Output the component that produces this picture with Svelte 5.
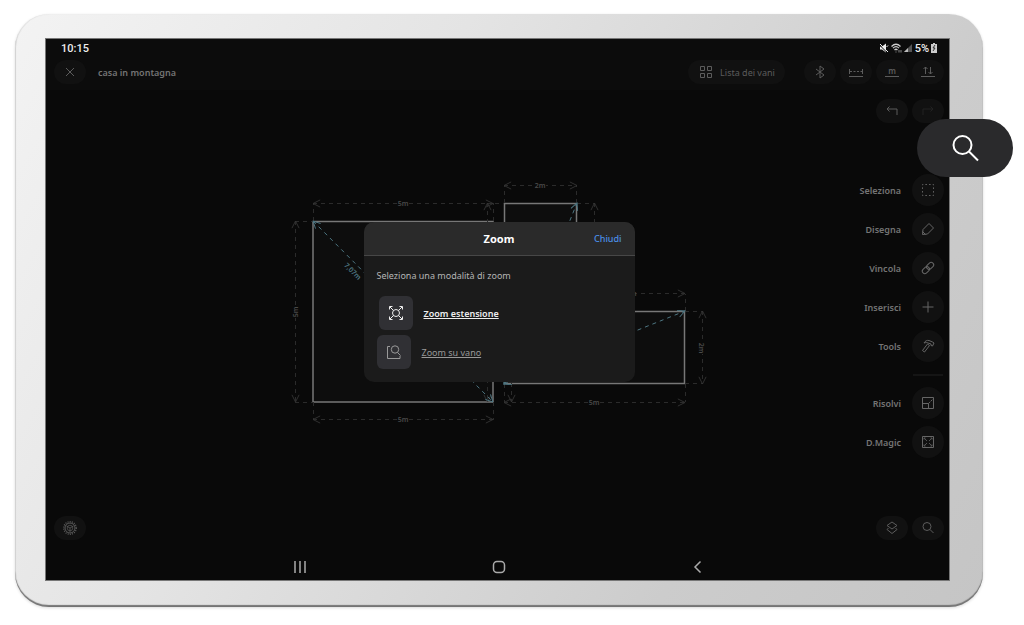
<script lang="ts">
    interface Tool {
        id: string;
        label: string;
    }

    const drawTools: Tool[] = [
        { id: 'select', label: 'Seleziona' },
        { id: 'draw', label: 'Disegna' },
        { id: 'link', label: 'Vincola' },
        { id: 'insert', label: 'Inserisci' },
        { id: 'tools', label: 'Tools' }
    ];

    const solveTools: Tool[] = [
        { id: 'solve', label: 'Risolvi' },
        { id: 'magic', label: 'D.Magic' }
    ];

    const headerActions: Tool[] = [
        { id: 'bluetooth', label: 'Bluetooth' },
        { id: 'measure', label: 'Misura' },
        { id: 'unit', label: 'Unità' },
        { id: 'sort', label: 'Ordina' }
    ];

    let dialogOpen = $state(true);
    let activeTool = $state('');

    function handleKeydown(e: KeyboardEvent) {
        if (e.key === 'Escape') dialogOpen = false;
    }
</script>

<svelte:window onkeydown={handleKeydown} />

{#snippet icon(id: string)}
    <svg class="icon" viewBox="0 0 16 16" aria-hidden="true">
        {#if id === 'close'}
            <path d="M4 4l8 8M12 4l-8 8" />
        {:else if id === 'grid'}
            <path d="M2.5 2.5h4v4h-4zM9.5 2.5h4v4h-4zM2.5 9.5h4v4h-4zM9.5 9.5h4v4h-4z" />
        {:else if id === 'bluetooth'}
            <path d="M4 5l8 6-4 3V2l4 3-8 6" />
        {:else if id === 'measure'}
            <path d="M1.5 5v5M14.5 5v5" />
            <path d="M2 7.5h12" stroke-dasharray="2 1.5" />
            <path d="M1 12.5h14" />
        {:else if id === 'unit'}
            <text x="8" y="10" text-anchor="middle">m</text>
            <path d="M1 12.5h14" />
        {:else if id === 'sort'}
            <path d="M5.5 10V3M3.5 5l2-2 2 2M10.5 3v7M8.5 8l2 2 2-2" />
            <path d="M1 12.5h14" />
        {:else if id === 'undo'}
            <path d="M5.5 3.5L3 6l2.5 2.5M3 6h10v6" />
        {:else if id === 'redo'}
            <path d="M10.5 3.5L13 6l-2.5 2.5M13 6H3v6" />
        {:else if id === 'select'}
            <rect x="2.5" y="2.5" width="11" height="11" stroke-dasharray="1.5 2.17" stroke-dashoffset=".75" />
        {:else if id === 'draw'}
            <path d="M2.500 13.500l.5-5 6-6 4.500 4.500-6 6zM2.500 10.500l3 3" />
        {:else if id === 'link'}
            <g transform="rotate(-45 8 8)">
                <rect x="1" y="5.500" width="8" height="5" rx="2.500" />
                <rect x="7" y="5.500" width="8" height="5" rx="2.500" />
            </g>
        {:else if id === 'insert'}
            <path d="M8 2.5v11M2.5 8h11" />
        {:else if id === 'tools'}
            <path d="M7.500 6l2 1.500-5 6.500-2-1.500zM4 5c1-2 3-3 5-2.500l3.500 1.500 1.500 1-1.500 3-1.500-.5v-1.500L8 5c-1-.6-2-.6-4 0z" />
        {:else if id === 'solve'}
            <path d="M2.5 2.5h11v11h-11zM2.5 8.500h6v5" />
            <path d="M8.500 8.500l5-5" stroke-dasharray="2 1" />
        {:else if id === 'magic'}
            <path d="M2.5 2.5h11v11h-11z" />
            <path d="M4.500 4.500l2.500 2.500M11.500 4.500l-2.500 2.500M4.500 11.500l2.500-2.500M11.500 11.500l-2.500-2.500M4 5.500V4h1.500M10.500 4H12v1.500M4 10.500V12h1.500M10.500 12H12v-1.500" stroke-width=".8" />
        {:else if id === 'settings'}
            <circle cx="8" cy="8" r="6.3" stroke-width="1.300" stroke-dasharray="1 1.200" />
            <circle cx="8" cy="8" r="5" />
            <circle cx="8" cy="8" r="2.800" stroke-width=".7" />
            <path d="M8 8v4M8 8L4.500 6M8 8l3.500-2" stroke-width=".8" />
        {:else if id === 'layers'}
            <path d="M8 2l5 3.500L8 9 3 5.500zM4.500 8L3 9.500 8 13.500l5-4L11.500 8" />
        {:else if id === 'search'}
            <circle cx="7" cy="6.500" r="4" />
            <path d="M10 9.500l3.500 3.500" />
        {:else if id === 'zoom-extents'}
            <circle cx="8" cy="8" r="3.500" />
            <path d="M5.500 5.500L2 2M10.500 5.500L14 2M5.500 10.500L2 14M10.500 10.500l3.500 3.500M1.500 4.500v-3h3M11.500 1.500h3v3M1.500 11.500v3h3M11.500 14.500h3v-3" />
        {:else if id === 'zoom-room'}
            <path d="M4 2.500H1.500V14.500h12.500v-2.500" />
            <circle cx="9" cy="5.500" r="3.700" />
            <path d="M11.500 8.500l3 3" />
        {/if}
    </svg>
{/snippet}

{#snippet toolButton(tool: Tool)}
    <button
        class="tool"
        aria-pressed={activeTool === tool.id}
        onclick={() => (activeTool = tool.id)}
    >
        <span>{tool.label}</span>
        <span class="tool-disc">{@render icon(tool.id)}</span>
    </button>
{/snippet}

<div class="tablet">
    <main class="screen">
        <!-- Android status bar -->
        <div class="status-bar">
            <time>10:15</time>
            <div class="status-icons">
                <svg width="10" height="10" viewBox="0 0 10 10" aria-hidden="true">
                    <path d="M1 3.500h2l4-3v9l-4-3H1z" fill="#eee" />
                    <path d="M0 1.500l8.500 8.500" stroke="#0c0c0c" />
                    <path d="M1 1l8 8M7.500 4L9 2.500" stroke="#eee" />
                </svg>
                <svg width="11" height="10" viewBox="0 0 11 10" aria-hidden="true">
                    <path d="M.5 3.500q4.500-4.500 9 0M2 5.200q3-3 6 0M3.500 7q1.500-1.500 3 0" fill="none" stroke="#ccc" stroke-width="1.200" />
                    <path d="M5 8.500v1M8 7v2.500M10 7v2.500" stroke="#888" />
                </svg>
                <svg width="9" height="10" viewBox="0 0 9 10" aria-hidden="true">
                    <path d="M0 9l8-8v8z" fill="#555" />
                    <path d="M0 9l4-4v4z" fill="#bbb" />
                </svg>
                <span>5%</span>
                <svg width="6" height="10" viewBox="0 0 6 10" aria-hidden="true">
                    <path d="M2 0h2v1h2v9H0V1h2z" fill="#ccc" />
                    <path d="M4 2L2 5h2L2 8" fill="none" stroke="#333" />
                </svg>
            </div>
        </div>

        <header class="top-bar">
            <button class="pill" aria-label="Chiudi progetto">{@render icon('close')}</button>
            <h1>casa in montagna</h1>
            <button class="pill rooms">{@render icon('grid')}<span>Lista dei vani</span></button>
            <div class="pill-group">
                {#each headerActions as action}
                    <button class="pill" aria-label={action.label}>{@render icon(action.id)}</button>
                {/each}
            </div>
        </header>

        <div class="workspace">
            <!-- Floor plan -->
            <svg class="plan" viewBox="285 177 425 250" role="img" aria-label="Pianta">
                <defs>
                    <marker id="tip" viewBox="0 0 10 10" refX="9" refY="5" markerWidth="9" markerHeight="9" markerUnits="userSpaceOnUse" orient="auto-start-reverse">
                        <path d="M1 1l8 4-8 4" fill="none" stroke="#363636" />
                    </marker>
                    <marker id="tip-diagonal" viewBox="0 0 10 10" refX="9" refY="5" markerWidth="9" markerHeight="9" markerUnits="userSpaceOnUse" orient="auto-start-reverse">
                        <path d="M1 1l8 4-8 4" fill="none" stroke="#4d7682" />
                    </marker>
                </defs>
                <g class="room">
                    <path d="M313 221.500h180V402H313z" />
                    <path d="M504.500 203.500H576.500V311.500H684.500V383.500H504.500z" />
                </g>
                <g class="extension">
                    <path d="M313.500 221V203M493.500 221V203M295 221.500h18M295 402.500h18M313.500 402v18M493.500 402v18" />
                    <path d="M504.500 203V185M576.500 203V185M577 203.500h18M487 203.500h17M685.500 311V294M685 311.500h18M685 383.500h18M504.500 384v18M685.500 384v18" />
                </g>
                <g class="dimension">
                    <path d="M313 203.500h180" />
                    <path d="M295.500 221v181" />
                    <path d="M313 419.500h180" />
                    <path d="M504 185.500h73" />
                    <path d="M577 293.500h108" />
                    <path d="M702.500 311v73" />
                    <path d="M504 402.500h181" />
                    <path d="M487.500 203v199" />
                    <path d="M594.500 203v108" />
                    <path d="M511.500 311v91" />
                </g>
                <g class="diagonal">
                    <path d="M313 221l180 181" />
                    <path d="M504 384l73-181" />
                    <path d="M504 384l181-73" />
                </g>
                <g class="measure">
                    <rect x="397" y="200" width="12" height="7" />
                    <text x="403" y="206">5m</text>
                    <rect x="397" y="416" width="12" height="7" />
                    <text x="403" y="422">5m</text>
                    <rect x="534" y="182" width="12" height="7" />
                    <text x="540" y="188">2m</text>
                    <rect x="588" y="399" width="12" height="7" />
                    <text x="594" y="405">5m</text>
                    <text x="631" y="296">3m</text>
                    <g transform="translate(295 312) rotate(-90)">
                        <rect x="-6" y="-3" width="12" height="7" />
                        <text y="3">5m</text>
                    </g>
                    <g transform="translate(702 348) rotate(90)">
                        <rect x="-6" y="-3" width="12" height="7" />
                        <text y="3">2m</text>
                    </g>
                    <text class="diagonal-label" transform="translate(351 273) rotate(45)">7,07m</text>
                </g>
            </svg>

            <aside class="tools">
                <div class="pill-group">
                    <button class="pill" aria-label="Annulla">{@render icon('undo')}</button>
                    <button class="pill faded" aria-label="Ripeti" disabled>{@render icon('redo')}</button>
                </div>
                <div class="tool-list">
                    {#each drawTools as tool}
                        {@render toolButton(tool)}
                    {/each}
                </div>
                <hr />
                <div class="tool-list">
                    {#each solveTools as tool}
                        {@render toolButton(tool)}
                    {/each}
                </div>
            </aside>

            {#if dialogOpen}
                <div class="overlay">
                    <section class="dialog" role="dialog" aria-labelledby="zoom-title">
                        <div class="dialog-head">
                            <h2 id="zoom-title">Zoom</h2>
                            <button class="dismiss" onclick={() => (dialogOpen = false)}>Chiudi</button>
                        </div>
                        <div class="dialog-body">
                            <p>Seleziona una modalità di zoom</p>
                            <button class="mode active">
                                <span class="mode-tile">{@render icon('zoom-extents')}</span>
                                <span class="mode-name">Zoom estensione</span>
                            </button>
                            <button class="mode">
                                <span class="mode-tile">{@render icon('zoom-room')}</span>
                                <span class="mode-name">Zoom su vano</span>
                            </button>
                        </div>
                    </section>
                </div>
            {/if}
        </div>

        <footer class="bottom-bar">
            <button class="pill" aria-label="Impostazioni">{@render icon('settings')}</button>
            <div class="pill-group">
                <button class="pill" aria-label="Livelli">{@render icon('layers')}</button>
                <button class="pill" aria-label="Zoom" onclick={() => (dialogOpen = true)}>{@render icon('search')}</button>
            </div>
        </footer>

        <!-- Android navigation -->
        <nav class="system-nav">
            <button aria-label="Recenti">
                <svg viewBox="0 0 14 14"><path d="M2 1v12M7 1v12M12 1v12" /></svg>
            </button>
            <button aria-label="Home">
                <svg viewBox="0 0 14 14"><rect x="1.5" y="1.5" width="11" height="11" rx="3.5" /></svg>
            </button>
            <button aria-label="Indietro">
                <svg viewBox="0 0 14 14"><path d="M9.5 1.5L4 7l5.5 5.5" /></svg>
            </button>
        </nav>
    </main>

    <!-- Enlarged zoom button over the frame -->
    <button class="callout" aria-label="Apri zoom" onclick={() => (dialogOpen = true)}>
        <svg viewBox="0 0 28 28">
            <circle cx="11.5" cy="11" r="9" />
            <path d="M18 17.500l9 9" />
        </svg>
    </button>
</div>

<style>
    :global(body) {
        margin: 0;
        background: #fff;
    }

    .tablet {
        position: relative;
        margin: 14px 41px 18px 15px;
        padding: 24px 33px 26px 30px;
        border-radius: 34px;
        background: linear-gradient(120deg, #f3f3f3 0%, #e4e4e4 35%, #cccccc 75%, #c5c5c5 100%);
        box-shadow: inset 0 -2px 1px #747474, inset 1px 0 1px #ddd, 0 1px 3px rgba(0,0,0,0.15);
        font-family: "Noto Sans", sans-serif;
    }
    .screen {
        display: flex;
        flex-direction: column;
        border: 1px solid #777;
        background: #090909;
        color: #747474;
    }

    button {
        border: none;
        padding: 0;
        background: none;
        color: inherit;
        font: inherit;
        cursor: pointer;
    }
    h1, h2, p { margin: 0; }
    svg { display: block; }
    .icon {
        width: 16px;
        height: 16px;
        fill: none;
        stroke: currentColor;
        stroke-width: 1;
    }
    .icon text {
        fill: currentColor;
        stroke: none;
        font-size: 8px;
        font-weight: 600;
    }

    /* Status bar */
    .status-bar {
        display: flex;
        justify-content: space-between;
        align-items: center;
        height: 18px;
        padding: 0 12px 0 15px;
        background: #0c0c0c;
        color: #eee;
        font-family: Roboto, sans-serif;
        font-size: 11px;
        font-weight: 500;
    }
    .status-icons {
        display: flex;
        align-items: center;
        gap: 2px;
    }

    /* Pills */
    .pill {
        display: flex;
        align-items: center;
        justify-content: center;
        width: 32px;
        height: 24px;
        border-radius: 12px;
        background: #111;
        color: #5c5c5c;
    }
    .pill-group {
        display: flex;
        gap: 4px;
    }
    .faded { color: #222; }

    .top-bar {
        display: flex;
        align-items: center;
        padding: 3px 5px 6px 8px;
        background: #0c0c0c;
    }
    h1 {
        flex: 1;
        margin-left: 12px;
        font-size: 9px;
        font-weight: 600;
    }
    .rooms {
        gap: 6px;
        width: 97px;
        margin-right: 19px;
        font-size: 9px;
    }

    /* Workspace */
    .workspace {
        position: relative;
        display: grid;
    }
    .plan {
        grid-area: 1 / 1;
        place-self: center;
        width: 425px;
        height: 250px;
    }
    .room path {
        fill: #0d0d0d;
        stroke: #777;
        stroke-width: 1.5;
    }
    .extension path,
    .dimension path {
        fill: none;
        stroke: #2b2b2b;
        stroke-dasharray: 4 4;
    }
    .dimension path {
        marker-start: url(#tip);
        marker-end: url(#tip);
    }
    .diagonal path {
        stroke: #4d7682;
        stroke-dasharray: 4 4;
        marker-start: url(#tip-diagonal);
        marker-end: url(#tip-diagonal);
    }
    .measure rect { fill: #090909; }
    .measure text {
        fill: #4a4a4a;
        font-size: 7px;
        font-weight: 600;
        text-anchor: middle;
    }
    .measure .diagonal-label { fill: #4d7682; }

    .tools {
        grid-area: 1 / 1;
        justify-self: end;
        display: flex;
        flex-direction: column;
        align-items: flex-end;
        padding: 9px 5px 56px;
    }
    .tool-list {
        display: flex;
        flex-direction: column;
        gap: 7px;
    }
    .pill-group + .tool-list { margin-top: 51px; }
    .tool {
        display: flex;
        align-items: center;
        justify-content: flex-end;
        gap: 11px;
        font-size: 9px;
        font-weight: 600;
    }
    .tool-disc {
        display: flex;
        align-items: center;
        justify-content: center;
        width: 32px;
        height: 32px;
        border-radius: 50%;
        background: #111;
    }
    .tool-disc .icon { color: #666; }
    hr {
        width: 30px;
        height: 2px;
        margin: 12px 1px 11px;
        border: none;
        background: #151515;
    }

    /* Zoom dialog */
    .overlay {
        position: absolute;
        inset: 0;
        display: flex;
        align-items: center;
        justify-content: center;
        padding-left: 3px;
    }
    .dialog {
        width: 271px;
        border-radius: 10px;
        overflow: hidden;
        background: #1b1b1b;
        color: #b5b5b5;
        font-size: 9px;
    }
    .dialog-head {
        display: grid;
        grid-template-columns: 1fr auto 1fr;
        align-items: center;
        height: 33px;
        padding: 0 13px;
        border-bottom: 1px solid #474747;
        background: #2a2a2a;
    }
    h2 {
        grid-column: 2;
        color: #fff;
        font-size: 11px;
        font-weight: 700;
    }
    .dismiss {
        justify-self: end;
        color: #4a8fe7;
        font-weight: 500;
    }
    .dialog-body {
        display: flex;
        flex-direction: column;
        align-items: flex-start;
        padding: 14px 13px 13px;
    }
    p {
        margin-bottom: 14px;
        line-height: 12px;
    }
    .mode {
        display: flex;
        align-items: center;
        gap: 11px;
        color: #999;
    }
    .mode.active {
        margin: 0 0 5px 2px;
        color: #eee;
        font-weight: 600;
    }
    .mode-tile {
        display: flex;
        align-items: center;
        justify-content: center;
        width: 34px;
        height: 34px;
        border-radius: 6px;
        background: #303034;
    }
    .mode-name { text-decoration: underline; }

    .bottom-bar {
        display: flex;
        justify-content: space-between;
        padding: 2px 5px 0 8px;
    }
    .system-nav {
        display: flex;
        justify-content: center;
        gap: 185px;
        padding: 20px 0 6px 3px;
    }
    .system-nav svg {
        width: 14px;
        height: 14px;
        fill: none;
        stroke: #aaa;
        stroke-width: 1.5;
    }

    .callout {
        position: absolute;
        top: 105px;
        right: -30px;
        display: flex;
        align-items: center;
        justify-content: center;
        width: 96px;
        height: 58px;
        border-radius: 29px;
        background: #2a2a2c;
    }
    .callout svg {
        width: 28px;
        height: 28px;
        fill: none;
        stroke: #fff;
        stroke-width: 2;
    }
</style>
